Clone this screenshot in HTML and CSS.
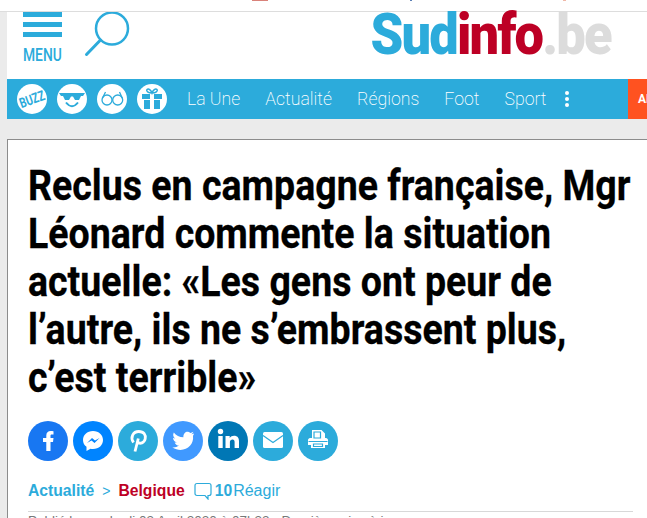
FILE: index.html
```html
<!DOCTYPE html>
<html lang="fr">
  <head>
    <meta charset="UTF-8" />
    <title>Sudinfo.be</title>
    <link rel="stylesheet" href="styles.css">
  </head>
  <body>
    <div class="topstrip">
      <span class="mark mark-red"></span>
      <span class="mark mark-blue"></span>
      <span class="mark mark-pink"></span>
    </div>

    <div class="page">
      <!-- menu, search and logo -->
      <header class="header">
        <div class="menu">
          <span class="bar"></span>
          <span class="bar"></span>
          <span class="bar"></span>
          <span class="menu-label">MENU</span>
        </div>
        <svg class="search" viewBox="0 0 46 46" width="46" height="46">
          <circle cx="27" cy="16.500" r="16" fill="none" stroke="#2cabdb" stroke-width="2.500" />
          <path d="M15.500 28 L1.500 42.500" fill="none" stroke="#2cabdb" stroke-width="3" stroke-linecap="round" />
        </svg>
        <div class="logo"><span class="logo-sud">Sud</span><span class="logo-info">info</span><span class="logo-be">.be</span></div>
      </header>

      <!-- blue nav bar -->
      <nav class="nav">
        <span class="round">
          <svg viewBox="0 0 30 30" width="30" height="30">
            <text x="15" y="20" class="buzz" transform="rotate(-20 15 15)" text-anchor="middle" textLength="26" lengthAdjust="spacingAndGlyphs">BUZZ</text>
          </svg>
        </span>
        <span class="round">
          <svg viewBox="0 0 30 30" width="30" height="30">
            <path d="M2 9 H28 L26 12 H24 L22 16 H18 L16 12.500 H14 L12 16 H8 L6 12 H4 Z" fill="#2cabdb" />
            <path d="M9 18.500 Q15 26 21 18.500" fill="none" stroke="#2cabdb" stroke-width="2" />
          </svg>
        </span>
        <span class="round">
          <svg viewBox="0 0 30 30" width="30" height="30" fill="none" stroke="#2cabdb" stroke-width="1.300">
            <circle cx="10" cy="16" r="5" />
            <circle cx="20.700" cy="16" r="5" />
            <path d="M5.500 14 L8.500 8 M25.200 14 L22.500 8" />
          </svg>
        </span>
        <span class="round">
          <svg viewBox="0 0 30 30" width="30" height="30">
            <path d="M5 10 H25 V15 H5 Z M7 16 H23 V25 H7 Z" fill="#2cabdb" />
            <path d="M13 9 H17 V25 H13 Z" fill="#fff" />
            <path d="M15 9 C11 9 9 7 10 5.500 C11.500 4 14 6 15 9 C16 6 18.500 4 20 5.500 C21 7 19 9 15 9 Z" fill="none" stroke="#2cabdb" stroke-width="1.500" />
          </svg>
        </span>
        <div class="nav-links">
          <a>La Une</a>
          <a>Actualité</a>
          <a>Régions</a>
          <a>Foot</a>
          <a>Sport</a>
        </div>
        <span class="dots"><i></i><i></i><i></i></span>
        <span class="nav-alert">AL</span>
      </nav>

      <!-- the article card -->
      <article class="card">
        <h1 class="title"><span>Reclus en campagne française, Mgr</span><br><span>Léonard commente la situation</span><br><span>actuelle: «Les gens ont peur de</span><br><span>l’autre, ils ne s’embrassent plus,</span><br><span>c’est terrible»</span></h1>

        <div class="share">
          <a class="btn fb">
            <svg viewBox="0 0 40 40" width="40" height="40"><path d="M22.500 30 V21 H25 L25.500 17 H22.500 V15 C22.500 13.800 22.900 13.500 24 13.500 H25.500 V10.200 C25 10.100 23.800 10 22.700 10 C20 10 18.300 11.700 18.300 14.500 V17 H15 V21 H18.300 V30 Z" fill="#fff" /></svg>
          </a>
          <a class="btn ms">
            <svg viewBox="0 0 40 40" width="40" height="40"><path d="M20 10 C14 10 10 14 10 19 C10 22 11.300 24.300 13.500 25.800 V30 L17.500 27.700 C18.300 27.900 19.100 28 20 28 C26 28 30 24 30 19 C30 14 26 10 20 10 Z" fill="#fff" /><path d="M14 22 L19 17 L22 19.500 L26.500 17 L21.500 22 L18.500 19.500 Z" fill="#0084ff" /></svg>
          </a>
          <a class="btn pin">
            <svg viewBox="0 0 40 40" width="40" height="40"><path d="M17 30.500 L20.300 17.500 M15.500 21.500 C12 16.500 15 10.500 20.800 10.500 C25.800 10.500 28 14 27.200 17.800 C26.400 21.800 22 23.500 19.500 21" fill="none" stroke="#fff" stroke-width="2.800" /></svg>
          </a>
          <a class="btn tw">
            <svg viewBox="0 0 40 40" width="40" height="40"><path d="M31 12.500 C30 13 29.200 13.200 28.300 13.300 C29.300 12.700 30 11.800 30.400 10.700 C29.400 11.300 28.400 11.700 27.300 11.900 C25 9.400 20 11 20.400 16.300 C16.500 16.100 13 14.200 10.800 11.400 C9.600 13.500 10.200 16 12.200 17.400 C11.400 17.400 10.700 17.200 10 16.800 C10 19 11.600 20.900 13.700 21.300 C13 21.500 12.300 21.500 11.700 21.400 C12.300 23.200 14 24.500 16 24.600 C14 26.100 11.700 26.800 9.300 26.500 C20 33 31.500 25.500 30 14.800 C30.500 14.100 30.800 13.300 31 12.500 Z" fill="#fff" /></svg>
          </a>
          <a class="btn li">
            <svg viewBox="0 0 40 40" width="40" height="40"><circle cx="12.500" cy="10.500" r="2.700" fill="#fff" /><path d="M10.300 15 H14.700 V27 H10.300 Z M17.500 15 H21.700 V17 C22.700 15.500 24.200 14.700 26 14.700 C29.500 14.700 31 16.800 31 20.300 V27 H26.600 V21 C26.600 19.400 26 18.500 24.600 18.500 C23 18.500 21.900 19.500 21.900 21 V27 H17.500 Z" fill="#fff" /></svg>
          </a>
          <a class="btn plain">
            <svg viewBox="0 0 40 40" width="40" height="40"><rect x="10" y="11" width="20" height="16" rx="1.500" fill="#fff" /><path d="M10 14.500 L20 21.500 L30 14.500" fill="none" stroke="#2cabdb" stroke-width="1.200" /></svg>
          </a>
          <a class="btn plain">
            <svg viewBox="0 0 40 40" width="40" height="40"><path d="M14 17 V9 H23.500 L27 12.500 V17 H28 C29 17 30 18 30 19 V24 H27 V27 H13 V24 H10 V19 C10 18 11 17 12 17 Z" fill="#fff" /><path d="M16 11 H22.500 V17 H16 Z M10.500 20.500 H29.500 M15.500 23 H24.500 V25.500 H15.500 Z" fill="none" stroke="#2cabdb" stroke-width="1.200" /></svg>
          </a>
        </div>

        <div class="crumbs">
          <a class="crumb-blue">Actualité</a>
          <span class="sep">&gt;</span>
          <a class="crumb-red">Belgique</a>
          <svg class="bubble" viewBox="0 0 18 18" width="18" height="18"><path d="M3 1.500 H15 C16.300 1.500 17 2.300 17 3.500 V11.500 C17 12.700 16.300 13.500 15 13.500 H14 V17 L11 13.500 H3 C1.700 13.500 1 12.700 1 11.500 V3.500 C1 2.300 1.700 1.500 3 1.500 Z" fill="none" stroke="#2cabdb" stroke-width="1.200" /></svg>
          <span class="count">10</span><span class="react">Réagir</span>
        </div>

        <p class="meta">Publié le vendredi 03 Avril 2020 à 07h32 - Dernière mise à jour</p>
      </article>
    </div>
  </body>
</html>
```

FILE: styles.css
```css
html,
body {
  margin: 0;
  padding: 0;
  height: 518px;
  overflow: hidden;
  background-color: #ebebeb;
  font-family: "Liberation Sans", Arial, sans-serif;
}

/* strip of the page above the site */
.topstrip {
  height: 11px;
  background-color: #ffffff;
  border-bottom: 1px solid #dddddd;
  position: relative;
}

.mark {
  position: absolute;
  top: 0;
  height: 1px;
}

.mark-red {
  left: 252px;
  width: 16px;
  background-color: #d9827a;
}

.mark-blue {
  left: 410px;
  width: 2px;
  background-color: #5a7fb5;
}

.mark-pink {
  left: 563px;
  width: 3px;
  background-color: #f0b8a8;
}

.page {
  margin-left: 7px;
}

/* header */
.header {
  height: 67px;
  background-color: #ffffff;
  display: flex;
  align-items: flex-start;
}

.menu {
  width: 39px;
  margin-left: 16px;
  display: flex;
  flex-direction: column;
}

.bar {
  height: 5px;
  margin-bottom: 5px;
  background-color: #2cabdb;
}

.menu-label {
  margin-top: 2px;
  font-family: Roboto, sans-serif;
  font-size: 18px;
  line-height: 21px;
  font-weight: 500;
  color: #2cabdb;
  white-space: nowrap;
  transform: scaleX(0.77);
  transform-origin: left center;
}

.search {
  margin: 0 0 0 23px;
  overflow: visible;
}

.logo {
  margin-left: auto;
  margin-right: 36px;
  font-family: Roboto, sans-serif;
  font-size: 58px;
  font-weight: 900;
  letter-spacing: -2px;
  line-height: 44px;
  white-space: nowrap;
  transform: scaleX(0.904);
  transform-origin: right center;
}

.logo-sud {
  color: #2cabdb;
}

.logo-info {
  color: #bd0025;
}

.logo-be {
  color: #dcdcdc;
}

/* nav */
.nav {
  height: 40px;
  background-color: #2cabdb;
  display: flex;
  align-items: center;
  padding-left: 10px;
  gap: 10px;
}

.round {
  width: 30px;
  height: 30px;
  border-radius: 50%;
  background-color: #ffffff;
  display: block;
}

.round svg {
  display: block;
}

.buzz {
  font-family: Roboto, sans-serif;
  font-size: 14px;
  font-weight: bold;
  fill: #2cabdb;
}

.nav-links {
  display: flex;
  gap: 25px;
  margin-left: 10px;
  font-family: Roboto, sans-serif;
  font-weight: 200;
  font-size: 17.700px;
  color: #ffffff;
}

.dots {
  display: flex;
  flex-direction: column;
  gap: 2px;
  margin-left: 9px;
}

.dots i {
  width: 4px;
  height: 4px;
  border-radius: 50%;
  background-color: #ffffff;
}

.nav-alert {
  margin-left: auto;
  width: 19px;
  height: 40px;
  line-height: 40px;
  padding-left: 10px;
  box-sizing: border-box;
  background-color: #ff5220;
  color: #ffffff;
  font-family: Roboto, sans-serif;
  font-size: 12px;
  font-weight: bold;
  overflow: hidden;
}

/* article */
.card {
  margin-top: 20px;
  height: 380px;
  background-color: #ffffff;
  border-top: 1px solid #8c8c8c;
  border-left: 1px solid #8c8c8c;
  padding: 22px 14px 0 20px;
}

.title {
  margin: 0;
  font-family: Roboto, sans-serif;
  font-size: 42px;
  font-weight: bold;
  line-height: 48px;
  color: #000000;
  white-space: nowrap;
  overflow: hidden;
  -webkit-text-stroke: 0.3px #000000;
}

.title span {
  display: inline-block;
  transform: scaleX(0.893);
  transform-origin: left center;
}

.share {
  display: flex;
  gap: 5px;
  margin-top: 19px;
}

.btn {
  width: 40px;
  height: 40px;
  border-radius: 50%;
  display: block;
}

.btn svg {
  display: block;
}

.fb {
  background-color: #1877f2;
}

.ms {
  background-color: #0084ff;
}

.pin,
.plain {
  background-color: #2cabdb;
}

.tw {
  background-color: #4099ff;
}

.li {
  background-color: #0077b5;
}

.crumbs {
  display: flex;
  align-items: center;
  margin-top: 19px;
  font-size: 15.700px;
  height: 22px;
}

.crumb-blue {
  font-weight: bold;
  color: #2cabdb;
}

.sep {
  margin: 0 8px;
  font-size: 14px;
  color: #2cabdb;
}

.crumb-red {
  font-weight: bold;
  color: #bd0025;
}

.bubble {
  margin-left: 9px;
  margin-right: 3px;
}

.count {
  font-weight: bold;
  color: #2cabdb;
}

.react {
  margin-left: 1px;
  color: #2cabdb;
  font-size: 16px;
}

.meta {
  margin: 9px 0 0;
  padding-top: 1px;
  border-top: 1px solid #d8d8d8;
  font-size: 13.500px;
  color: #777777;
  white-space: nowrap;
}
```
